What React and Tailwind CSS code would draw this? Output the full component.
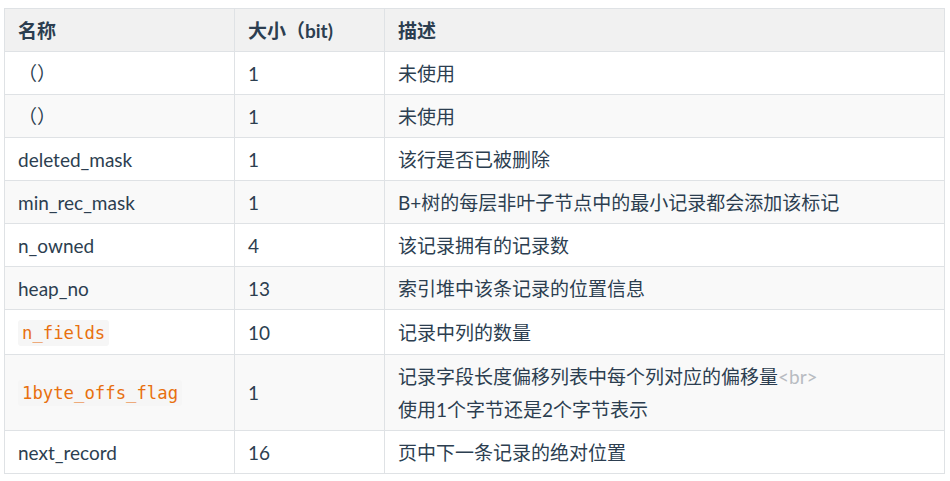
const rows = [
  { name: '（）', size: '1', desc: '未使用' },
  { name: '（）', size: '1', desc: '未使用' },
  { name: 'deleted_mask', size: '1', desc: '该行是否已被删除' },
  { name: 'min_rec_mask', size: '1', desc: 'B+树的每层非叶子节点中的最小记录都会添加该标记' },
  { name: 'n_owned', size: '4', desc: '该记录拥有的记录数' },
  { name: 'heap_no', size: '13', desc: '索引堆中该条记录的位置信息' },
  { name: 'n_fields', code: true, size: '10', desc: '记录中列的数量' },
  {
    name: '1byte_offs_flag',
    code: true,
    size: '1',
    desc: (
      <>
        记录字段长度偏移列表中每个列对应的偏移量<span className="text-[#b8bcc2]">&lt;br&gt;</span>
        <br />
        使用1个字节还是2个字节表示
      </>
    ),
  },
  { name: 'next_record', size: '16', desc: '页中下一条记录的绝对位置' },
];

const cell = 'border border-[#dfe2e5] px-[13px] py-[4.5px] leading-[33px] text-left align-middle';

const App = () => {
  return (
    <div className="w-[950px] h-[481px] bg-white pl-[4px] pt-[8px] font-['Lato','Noto_Sans_CJK_SC',sans-serif] text-[19px] text-[#2c3e50]">
      <table className="border-collapse w-[940px] table-fixed">
        <colgroup>
          <col className="w-[230px]" />
          <col className="w-[150px]" />
          <col className="w-[560px]" />
        </colgroup>
        <thead>
          <tr className="bg-[#f1f1f1]">
            <th className={`${cell} font-bold`}>名称</th>
            <th className={`${cell} font-bold`}>大小（bit)</th>
            <th className={`${cell} font-bold`}>描述</th>
          </tr>
        </thead>
        <tbody>
          {rows.map((r, i) => (
            <tr key={i} className={i % 2 === 1 ? 'bg-[#f9f9f9]' : 'bg-white'}>
              <td className={cell}>
                {r.code ? (
                  <code className="bg-[#f6f6f6] text-[#e8700f] px-[4px] py-[3px] rounded-[3px] font-['DejaVu_Sans_Mono',monospace] text-[17.3px]">
                    {r.name}
                  </code>
                ) : (
                  r.name
                )}
              </td>
              <td className={cell}>{r.size}</td>
              <td className={cell}>{r.desc}</td>
            </tr>
          ))}
        </tbody>
      </table>
    </div>
  );
};

export default App;
